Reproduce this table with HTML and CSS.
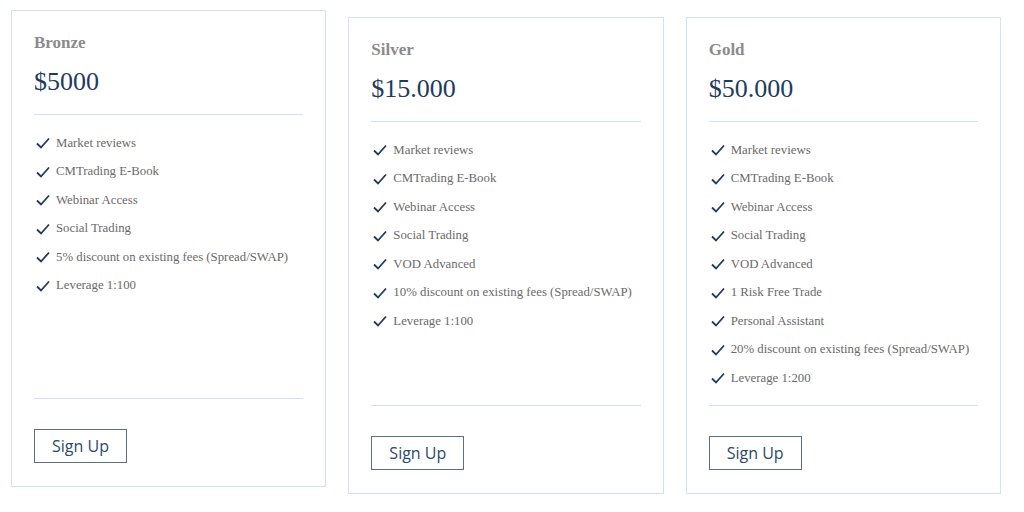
FILE: index.html
```html
<!DOCTYPE html>
<html>
<head>
<meta charset="utf-8">
<link rel="stylesheet" href="styles.css">
</head>
<body>
<div class="plans">
  <div class="card card-raised">
    <h3 class="plan-name">Bronze</h3>
    <div class="price">$5000</div>
    <ul class="features">
      <li><svg class="check" viewBox="0 0 14 12"><path d="M1 6.5 L5 10.5 L13 1.5"/></svg>Market reviews</li>
      <li><svg class="check" viewBox="0 0 14 12"><path d="M1 6.5 L5 10.5 L13 1.5"/></svg>CMTrading E-Book</li>
      <li><svg class="check" viewBox="0 0 14 12"><path d="M1 6.5 L5 10.5 L13 1.5"/></svg>Webinar Access</li>
      <li><svg class="check" viewBox="0 0 14 12"><path d="M1 6.5 L5 10.5 L13 1.5"/></svg>Social Trading</li>
      <li><svg class="check" viewBox="0 0 14 12"><path d="M1 6.5 L5 10.5 L13 1.5"/></svg>5% discount on existing fees (Spread/SWAP)</li>
      <li><svg class="check" viewBox="0 0 14 12"><path d="M1 6.5 L5 10.5 L13 1.5"/></svg>Leverage 1:100</li>
    </ul>
    <div class="footer"><a class="btn">Sign Up</a></div>
  </div>
  <div class="card">
    <h3 class="plan-name">Silver</h3>
    <div class="price">$15.000</div>
    <ul class="features">
      <li><svg class="check" viewBox="0 0 14 12"><path d="M1 6.5 L5 10.5 L13 1.5"/></svg>Market reviews</li>
      <li><svg class="check" viewBox="0 0 14 12"><path d="M1 6.5 L5 10.5 L13 1.5"/></svg>CMTrading E-Book</li>
      <li><svg class="check" viewBox="0 0 14 12"><path d="M1 6.5 L5 10.5 L13 1.5"/></svg>Webinar Access</li>
      <li><svg class="check" viewBox="0 0 14 12"><path d="M1 6.5 L5 10.5 L13 1.5"/></svg>Social Trading</li>
      <li><svg class="check" viewBox="0 0 14 12"><path d="M1 6.5 L5 10.5 L13 1.5"/></svg>VOD Advanced</li>
      <li><svg class="check" viewBox="0 0 14 12"><path d="M1 6.5 L5 10.5 L13 1.5"/></svg>10% discount on existing fees (Spread/SWAP)</li>
      <li><svg class="check" viewBox="0 0 14 12"><path d="M1 6.5 L5 10.5 L13 1.5"/></svg>Leverage 1:100</li>
    </ul>
    <div class="footer"><a class="btn">Sign Up</a></div>
  </div>
  <div class="card">
    <h3 class="plan-name">Gold</h3>
    <div class="price">$50.000</div>
    <ul class="features">
      <li><svg class="check" viewBox="0 0 14 12"><path d="M1 6.5 L5 10.5 L13 1.5"/></svg>Market reviews</li>
      <li><svg class="check" viewBox="0 0 14 12"><path d="M1 6.5 L5 10.5 L13 1.5"/></svg>CMTrading E-Book</li>
      <li><svg class="check" viewBox="0 0 14 12"><path d="M1 6.5 L5 10.5 L13 1.5"/></svg>Webinar Access</li>
      <li><svg class="check" viewBox="0 0 14 12"><path d="M1 6.5 L5 10.5 L13 1.5"/></svg>Social Trading</li>
      <li><svg class="check" viewBox="0 0 14 12"><path d="M1 6.5 L5 10.5 L13 1.5"/></svg>VOD Advanced</li>
      <li><svg class="check" viewBox="0 0 14 12"><path d="M1 6.5 L5 10.5 L13 1.5"/></svg>1 Risk Free Trade</li>
      <li><svg class="check" viewBox="0 0 14 12"><path d="M1 6.5 L5 10.5 L13 1.5"/></svg>Personal Assistant</li>
      <li><svg class="check" viewBox="0 0 14 12"><path d="M1 6.5 L5 10.5 L13 1.5"/></svg>20% discount on existing fees (Spread/SWAP)</li>
      <li><svg class="check" viewBox="0 0 14 12"><path d="M1 6.5 L5 10.5 L13 1.5"/></svg>Leverage 1:200</li>
    </ul>
    <div class="footer"><a class="btn">Sign Up</a></div>
  </div>
</div>
</body>
</html>
```
FILE: styles.css
```css
* { box-sizing: border-box; }
html, body { margin: 0; padding: 0; background: #fff; }
body { font-family: "Liberation Serif", "DejaVu Serif", serif; }

.plans {
  display: grid;
  grid-template-columns: repeat(3, 1fr);
  column-gap: 22px;
  padding: 17px 23px 0 11px;
  align-items: stretch;
}

.card {
  border: 1px solid #d3e0fa;
  padding: 21px 22px 23px 22px;
  display: flex;
  flex-direction: column;
  height: 477px;
  background: #fff;
}
.card-raised { transform: translateY(-7px); }

.plan-name {
  margin: 0;
  font-size: 17px;
  line-height: 22px;
  font-weight: bold;
  color: #8b8b8b;
}

.price {
  margin-top: 11px;
  font-size: 26px;
  line-height: 34px;
  color: #1f3b5e;
  padding-bottom: 15px;
  border-bottom: 1px solid #d3e0fa;
}

.features {
  list-style: none;
  margin: 0;
  padding: 14px 0 0 0;
  flex: 1;
}
.features li {
  display: flex;
  align-items: center;
  height: 28.5px;
  font-size: 12.8px;
  white-space: nowrap;
  color: #6a6a6a;
}
.check {
  width: 14px;
  height: 12px;
  margin: 0 6px 0 2px;
  fill: none;
  stroke: #1f3b5e;
  stroke-width: 1.8;
  flex: none;
}

.footer {
  border-top: 1px solid #d3e0fa;
  padding-top: 30px;
}
.btn {
  display: inline-flex;
  align-items: center;
  justify-content: center;
  width: 93px;
  height: 34px;
  border: 1px solid #5b6f86;
  font-family: "Open Sans", sans-serif;
  font-size: 16px;
  color: #2a4a6c;
}
```
